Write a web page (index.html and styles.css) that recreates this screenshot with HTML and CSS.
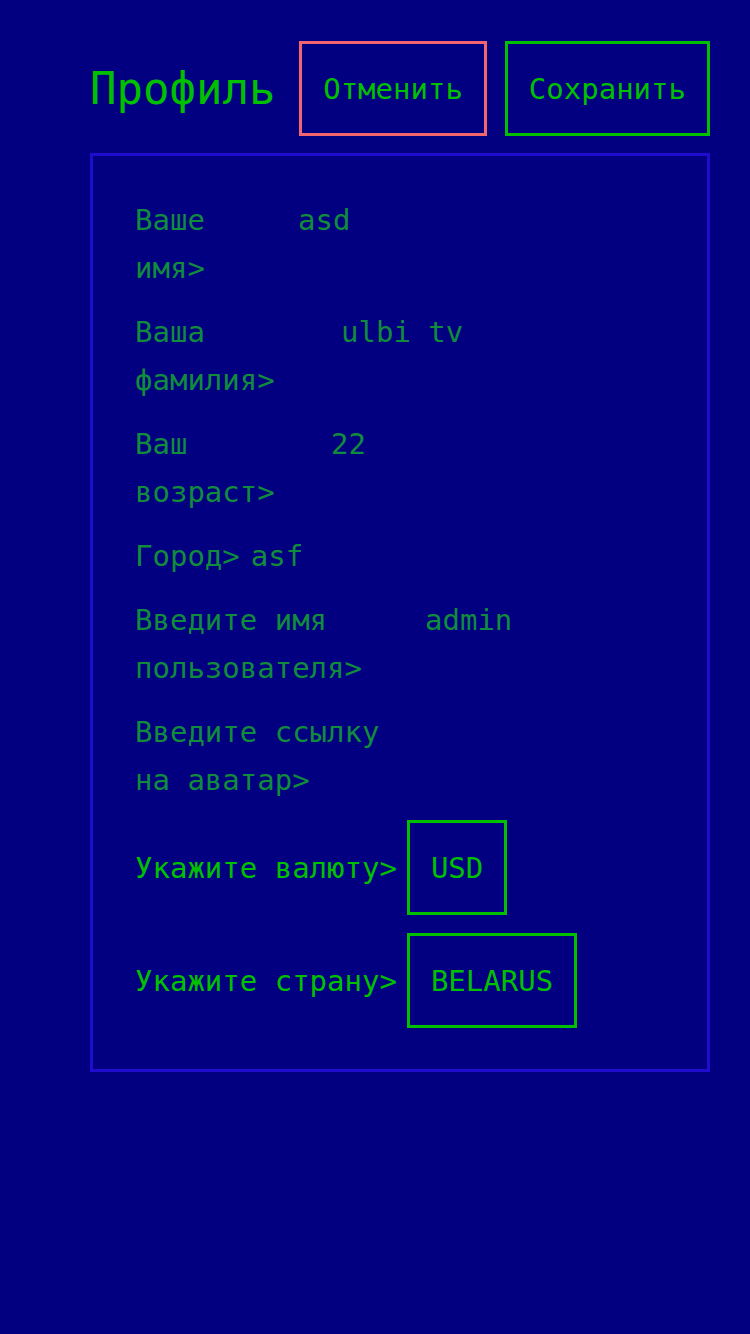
FILE: index.html
```html
<!DOCTYPE html>
<html lang="ru">
<head>
<meta charset="utf-8">
<title>Профиль</title>
<link rel="stylesheet" href="styles.css">
</head>
<body>
<div class="page">
  <header class="header">
    <h1 class="title">Профиль</h1>
    <div class="actions">
      <button class="btn btn-cancel">Отменить</button>
      <button class="btn btn-save">Сохранить</button>
    </div>
  </header>
  <section class="card">
    <div class="row">
      <span class="label w-name">Ваше имя&gt;</span>
      <span class="value">asd</span>
    </div>
    <div class="row">
      <span class="label w-last">Ваша фамилия&gt;</span>
      <span class="value">ulbi tv</span>
    </div>
    <div class="row">
      <span class="label w-age">Ваш возраст&gt;</span>
      <span class="value">22</span>
    </div>
    <div class="row">
      <span class="label w-city">Город&gt;</span>
      <span class="value">asf</span>
    </div>
    <div class="row">
      <span class="label w-user">Введите имя пользователя&gt;</span>
      <span class="value">admin</span>
    </div>
    <div class="row">
      <span class="label w-avatar">Введите ссылку на аватар&gt;</span>
      <span class="value"></span>
    </div>
    <div class="row row-select">
      <span class="label label-active">Укажите валюту&gt;</span>
      <div class="select">USD</div>
    </div>
    <div class="row row-select row-last">
      <span class="label label-active">Укажите страну&gt;</span>
      <div class="select">BELARUS</div>
    </div>
  </section>
</div>
</body>
</html>
```
FILE: styles.css
```css
html, body {
  margin: 0;
  padding: 0;
  background: #020080;
  min-height: 100%;
}

.page {
  padding: 41px 40px 0 90px;
}

.header {
  display: flex;
  align-items: center;
}

.title {
  margin: 0;
  font-family: "DejaVu Sans Mono", monospace;
  font-weight: normal;
  font-size: 44px;
  line-height: 48px;
  color: #00c000;
}

.actions {
  margin-left: auto;
  display: flex;
  gap: 18px;
}

.btn {
  height: 95px;
  padding: 0 21px;
  background: transparent;
  border: 3px solid #00c000;
  font-family: "DejaVu Sans Mono", monospace;
  font-size: 29px;
  color: #00c000;
}

.btn-cancel {
  border-color: #f2646e;
}

.card {
  margin-top: 17px;
  border: 3px solid #1f0ccc;
  padding: 40px 40px 41px 42px;
  display: flex;
  flex-direction: column;
  gap: 16px;
}

.row {
  display: flex;
  align-items: flex-start;
  font-family: "DejaVu Sans Mono", monospace;
  font-size: 29px;
  line-height: 48px;
  color: #108c3c;
}

.row-select {
  align-items: center;
}

.row-last {
  margin-top: 2px;
}

.label {
  flex: none;
}

.w-name { width: 72px; margin-right: 91px; }
.w-last { width: 141px; margin-right: 65px; }
.w-age { width: 141px; margin-right: 55px; }
.w-city { margin-right: 11px; }
.w-user { width: 228px; margin-right: 62px; }
.w-avatar { width: 250px; }

.label-active {
  color: #00c000;
  margin-right: 10px;
}

.value {
  white-space: pre;
}

.select {
  height: 89px;
  display: flex;
  align-items: center;
  padding: 0 21px;
  border: 3px solid #00c000;
  font-family: "DejaVu Sans Mono", monospace;
  font-size: 29px;
  color: #00c000;
}
```
